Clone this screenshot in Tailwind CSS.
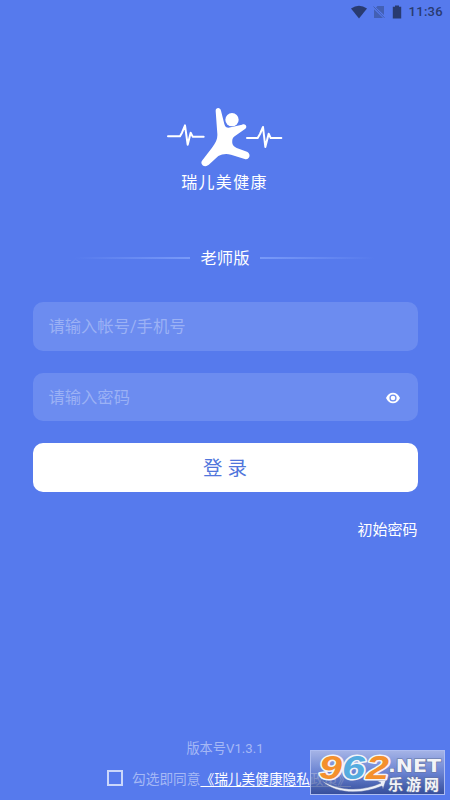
<!DOCTYPE html>
<html lang="zh-CN">
<head>
<meta charset="utf-8">
<meta name="viewport" content="width=device-width, initial-scale=1">
<title>瑞儿美健康</title>
<script src="https://cdn.jsdelivr.net/npm/@tailwindcss/browser@4"></script>
</head>
<body class="font-['Roboto','Noto_Sans_CJK_SC',sans-serif]">
<main class="relative flex h-[800px] w-[450px] flex-col overflow-hidden bg-[#567aed] text-white">
  <header class="flex h-6 shrink-0 items-center justify-end pr-[7px] text-[#293b70]">
    <svg class="mr-[5px] h-[14px] w-[18px]" viewBox="0 0 18 14" fill="currentColor"><path d="M1 3.5Q9-2.2 17 3.5L9 13.5Z"/></svg>
    <svg class="mr-[7px] h-[14px] w-3 text-[#4360b4]" viewBox="0 0 12 14" fill="currentColor"><path d="M4.5 1H11V10L3 2.4ZM1 4.2 10 13H1Z"/><path d="M.5 1.5 11.5 12.8" fill="none" stroke="currentColor" stroke-width="1"/></svg>
    <svg class="mr-[7px] h-[14px] w-[10px]" viewBox="0 0 10 14" fill="currentColor"><path d="M3 .5h4v1.3h2.2V13.5H.8V1.8H3Z"/></svg>
    <span class="text-[13px] font-medium leading-6 tracking-[0.3px]">11:36</span>
  </header>

  <section class="mt-[76px] flex shrink-0 flex-col items-center">
    <svg class="h-[68px] w-[130px]" viewBox="0 0 390 204" fill="none" stroke="#fff" stroke-linecap="round" stroke-linejoin="round">
      <path stroke-width="6" d="M24 109H60L66 98 75 76 83 134 92 98 98 110H131M261 114H293L300 102 309 81 316 141 326 101 332 114H364"/>
      <circle cx="216" cy="59" r="20" fill="#fff" stroke="none"/>
      <path fill="#fff" stroke="none" d="M167 33C166 22 181 21 183 32L193 72C196 83 203 85 212 82L246 74C256 69 264 80 255 87L224 109C217 114 216 120 217 130C218 137 223 141 230 144L261 155C275 162 268 181 254 177L213 164C199 160 186 162 175 168L148 193C137 205 118 195 126 182L156 143C168 127 173 117 172 101Z"/>
    </svg>
    <h1 class="mt-[3px] h-6 pr-px text-[16px] font-normal leading-6 tracking-[1.3px]">瑞儿美健康</h1>
  </section>

  <div class="mt-[51px] flex h-6 shrink-0 items-center justify-center gap-[10px]">
    <i class="h-0.5 w-[115px] bg-linear-to-r from-transparent to-[#799af8]"></i>
    <h2 class="w-[50px] pt-[2px] text-center text-[16.3px] font-normal leading-6">老师版</h2>
    <i class="h-0.5 w-[115px] bg-linear-to-l from-transparent to-[#799af8]"></i>
  </div>

  <form class="mx-8 mt-8 flex shrink-0 flex-col px-[0.5px]">
    <div class="flex h-[49px] items-center rounded-[10px] bg-[#6c8cf0] px-4 pt-[2px] text-[16.3px] text-[#9bb1f5]">请输入帐号/手机号</div>
    <div class="mt-[22px] flex h-12 items-center justify-between rounded-[10px] bg-[#6c8cf0] px-4 pt-[2px] text-[16.3px] text-[#9bb1f5]">
      <span>请输入密码</span>
      <svg class="mr-px h-[12px] w-[16px] text-white" viewBox="0 0 16 12"><path fill="currentColor" fill-rule="evenodd" d="M1 6C4-1 12-1 15 6C12 13 4 13 1 6ZM8 2.4A3.6 3.6 0 1 0 8 9.6A3.6 3.6 0 1 0 8 2.4Z"/><circle cx="8" cy="6" r="2.3" fill="currentColor"/></svg>
    </div>
    <button type="button" class="mt-[22px] h-[49px] rounded-[10px] bg-white pt-[2px] text-[19.5px] text-[#5176dc]">登 录</button>
    <a class="mt-[26px] self-end text-[15px] leading-6">初始密码</a>
  </form>

  <footer class="mt-auto flex shrink-0 flex-col pb-[10px]">
    <p class="relative top-px text-center text-[13.2px] leading-6 text-[#a5b8f5]">版本号V1.3.1</p>
    <div class="mt-[6px] flex h-6 items-center whitespace-nowrap pl-[107px] text-[13.7px] leading-6">
      <span class="mr-[9px] size-4 border-2 border-[#cbd7fb]"></span>
      <span class="pt-px text-[#a5b8f5]">勾选即同意</span><a class="pt-px underline decoration-1 underline-offset-2">《瑞儿美健康隐私政策》</a>
    </div>
  </footer>

  <aside class="absolute left-[310px] top-[750px] h-[45px] w-[135px] border border-[#aebdf1] bg-linear-to-b from-[#adb9e5]/90 via-[#7186c9]/75 to-[#2f4488]/80">
    <svg class="h-full w-full overflow-visible" viewBox="0 0 133 43" font-family="'Liberation Sans','Noto Sans CJK SC',sans-serif" font-weight="700">
      <path d="M10 29C27 40 50 41 70 32L66 30 75 29 72 38 71 35C50 44 23 43 10 29Z" fill="#edf0f8" stroke="#53659e" stroke-width=".5"/>
      <g font-size="33" font-style="italic" stroke="#f3f4f8" stroke-width="3" paint-order="stroke" stroke-linejoin="round">
        <text x="8" y="27.5" textLength="23" lengthAdjust="spacingAndGlyphs" fill="#f4902c">9</text>
        <text x="31" y="27.5" textLength="23" lengthAdjust="spacingAndGlyphs" fill="#55acdf">6</text>
        <text x="55" y="27.5" textLength="23" lengthAdjust="spacingAndGlyphs" fill="#f4902c">2</text>
      </g>
      <g fill="#f3f4f8" stroke="#6574a0" stroke-width="1.2" paint-order="stroke">
        <text x="77" y="21" font-size="18" textLength="53" lengthAdjust="spacingAndGlyphs" font-family="'DejaVu Sans',sans-serif">.NET</text>
        <text x="77" y="38.5" font-size="15" textLength="51" lengthAdjust="spacing">乐游网</text>
      </g>
    </svg>
  </aside>
</main>
</body>
</html>
